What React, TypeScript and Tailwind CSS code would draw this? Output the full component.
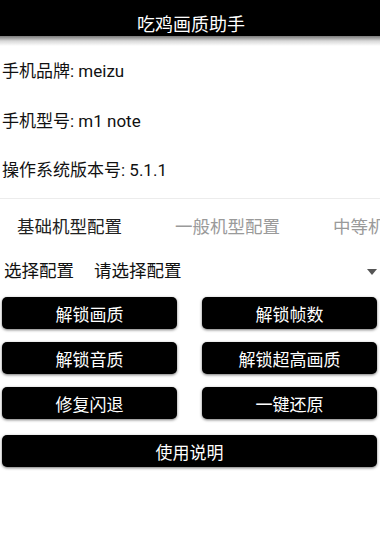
import React from "react";

const font = { fontFamily: 'Roboto, "Noto Sans CJK SC", "Noto Sans", sans-serif' };

function Btn({ label, wide }: { label: string; wide?: boolean }) {
  return (
    <div
      className={`h-[32px] rounded-[5px] bg-black text-white text-[17px] leading-none flex items-center justify-center pt-[5px] shadow-[0_1px_3px_rgba(0,0,0,0.55)] ${wide ? "col-span-2" : ""}`}
    >
      {label}
    </div>
  );
}

export default function App() {
  return (
    <div className="w-[380px] h-[545px] bg-white overflow-hidden" style={font}>
      <div className="h-[36px] bg-black text-white text-[18px] leading-none flex items-end justify-center pb-[2px]">
        <span className="ml-[2px]">吃鸡画质助手</span>
      </div>
      <div className="h-[10px] bg-gradient-to-b from-[#7a7a7a] via-[#d8d8d8] to-white" />
      <div className="text-[17px] text-[#111] leading-none">
        <div className="h-[50px] flex items-center pl-[2px]">手机品牌: meizu</div>
        <div className="h-[50px] flex items-center pl-[2px]">手机型号: m1 note</div>
        <div className="h-[48px] flex items-center pl-[2px]">操作系统版本号: 5.1.1</div>
      </div>
      <div className="h-[1px] bg-[#ececec] mt-[4px]" />
      <div className="h-[58px] flex items-center whitespace-nowrap text-[17.5px] leading-none">
        <span className="w-[158px] shrink-0 pl-[17px] text-[#222]">基础机型配置</span>
        <span className="w-[158px] shrink-0 pl-[17px] text-[#9a9a9a]">一般机型配置</span>
        <span className="w-[158px] shrink-0 pl-[17px] text-[#9a9a9a]">中等机型配置</span>
      </div>
      <div className="h-[30px] flex items-center text-[17.5px] leading-none text-[#111]">
        <span className="pl-[4px]">选择配置</span>
        <span className="pl-[20px]">请选择配置</span>
        <span className="ml-auto mr-[3px] w-0 h-0 border-l-[5px] border-r-[5px] border-t-[6px] border-l-transparent border-r-transparent border-t-[#555]" />
      </div>
      <div className="grid grid-cols-2 gap-x-[25px] gap-y-[13px] pl-[2px] pr-[3px] mt-[10px]">
        <Btn label="解锁画质" />
        <Btn label="解锁帧数" />
        <Btn label="解锁音质" />
        <Btn label="解锁超高画质" />
        <Btn label="修复闪退" />
        <Btn label="一键还原" />
      </div>
      <div className="pl-[2px] pr-[3px] mt-[16px]">
        <Btn label="使用说明" wide />
      </div>
    </div>
  );
}
